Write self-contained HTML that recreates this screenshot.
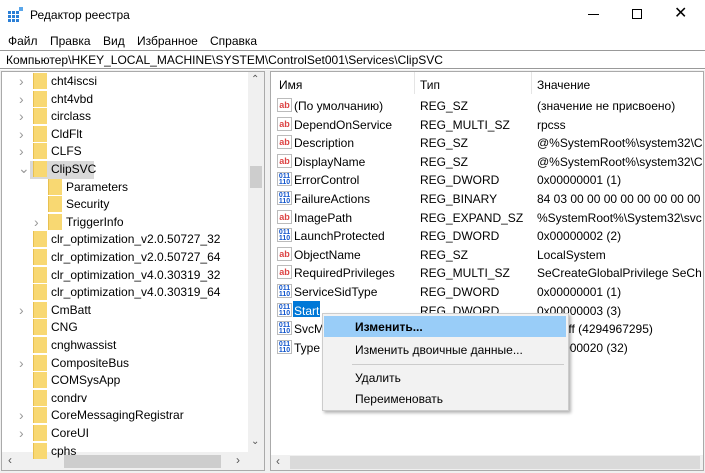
<!DOCTYPE html><html><head><meta charset="utf-8"><style>
*{margin:0;padding:0;box-sizing:border-box}
body{width:705px;height:473px;background:#fff;font-family:"Liberation Sans","DejaVu Sans",sans-serif;font-size:12px;color:#000;position:relative;overflow:hidden}
.a{position:absolute;white-space:nowrap}
.fold{position:absolute;width:14px;height:16px;background:#f8d872;border-left:1px solid #e8c050}
.chev{position:absolute;color:#999;font-size:14px;line-height:14px}
.ic{position:absolute;width:15px;height:14px;font-size:9px;font-weight:bold;line-height:13px;text-align:center;border:1px solid #bbb;background:#fff}
.ab{color:#d44}
.bn{color:#15c;font-size:7px;line-height:6px;padding-top:1px}
#rows{position:absolute;left:0;top:0;width:702px;height:473px;overflow:hidden}
</style></head><body>
<div class="a" style="left:0;top:0;width:705px;height:30px;background:#fff"></div>
<svg class="a" style="left:8px;top:7px" width="16" height="16"><g fill="#2b7fd6"><rect x="0" y="4" width="3" height="3"/><rect x="4" y="4" width="3" height="3"/><rect x="8" y="4" width="3" height="3"/><rect x="0" y="8" width="3" height="3"/><rect x="4" y="8" width="3" height="3"/><rect x="8" y="8" width="3" height="3"/><rect x="0" y="12" width="3" height="3"/><rect x="4" y="12" width="3" height="3"/><rect x="8" y="12" width="3" height="3"/><rect x="11" y="0" width="4" height="4" fill="#5aa6ea"/></g></svg>
<div class="a" style="left:30px;top:8px;font-size:12px">Редактор реестра</div>
<div class="a" style="left:588px;top:14px;width:11px;height:1px;background:#000"></div>
<div class="a" style="left:632px;top:9px;width:10px;height:10px;border:1px solid #000"></div>
<div class="a" style="left:674px;top:3px;font-size:16px;font-weight:300">✕</div>
<div class="a" style="left:8px;top:34px">Файл</div>
<div class="a" style="left:50px;top:34px">Правка</div>
<div class="a" style="left:103px;top:34px">Вид</div>
<div class="a" style="left:137px;top:34px">Избранное</div>
<div class="a" style="left:210px;top:34px">Справка</div>
<div class="a" style="left:0;top:50px;width:705px;height:19px;border-top:1px solid #999;border-bottom:1px solid #999;background:#fff"></div>
<div class="a" style="left:6px;top:53px">Компьютер\HKEY_LOCAL_MACHINE\SYSTEM\ControlSet001\Services\ClipSVC</div>
<div class="a" style="left:0;top:70px;width:705px;height:403px;background:#f0f0f0"></div>
<div class="a" style="left:1px;top:71px;width:264px;height:400px;background:#fff;border:1px solid #aaa"></div>
<div class="a" style="left:270px;top:71px;width:434px;height:400px;background:#fff;border:1px solid #aaa"></div>
<div class="a" style="left:248px;top:72px;width:16px;height:380px;background:#f0f0f0"></div>
<div class="a" style="left:250px;top:166px;width:12px;height:22px;background:#cdcdcd"></div>
<div class="a" style="left:251px;top:74px;color:#555;font-size:10px">⌃</div>
<div class="a" style="left:251px;top:436px;color:#555;font-size:10px">⌄</div>
<div class="a" style="left:2px;top:452px;width:262px;height:18px;background:#f0f0f0"></div>
<div class="a" style="left:64px;top:455px;width:157px;height:13px;background:#cdcdcd"></div>
<div class="a" style="left:8px;top:453px;color:#555">‹</div>
<div class="a" style="left:236px;top:453px;color:#555">›</div>
<div class="a" style="left:271px;top:455px;width:432px;height:15px;background:#f0f0f0"></div>
<div class="a" style="left:290px;top:456px;width:410px;height:13px;background:#dadada"></div>
<div class="a" style="left:276px;top:454px;color:#555">‹</div>
<div class="a" style="left:30px;top:161px;width:64px;height:18px;background:#d9d9d9"></div>
<div id="tree"></div>
<div class="a" style="left:279px;top:78px">Имя</div>
<div class="a" style="left:414px;top:72px;width:1px;height:22px;background:#e5e5e5"></div>
<div class="a" style="left:420px;top:78px">Тип</div>
<div class="a" style="left:531px;top:72px;width:1px;height:22px;background:#e5e5e5"></div>
<div class="a" style="left:537px;top:78px">Значение</div>
<div class="a" style="left:293px;top:301px;width:27px;height:16px;background:#0078d7"></div>
<div id="rows"></div>
<div class="a" style="left:322px;top:313px;width:247px;height:98px;background:#f2f2f2;border:1px solid #ccc;box-shadow:2px 2px 3px rgba(0,0,0,.3)"></div>
<div class="a" style="left:324px;top:316px;width:242px;height:21px;background:#99cdf8"></div>
<div class="a" style="left:355px;top:320px;font-weight:bold">Изменить...</div>
<div class="a" style="left:355px;top:343px">Изменить двоичные данные...</div>
<div class="a" style="left:352px;top:364px;width:212px;height:1px;background:#ccc"></div>
<div class="a" style="left:355px;top:371px">Удалить</div>
<div class="a" style="left:355px;top:392px">Переименовать</div>
<script>
var t=[["cht4iscsi",0,1],["cht4vbd",0,1],["circlass",0,1],["CldFlt",0,1],["CLFS",0,1],["ClipSVC",0,2],["Parameters",1,0],["Security",1,0],["TriggerInfo",1,1],["clr_optimization_v2.0.50727_32",0,0],["clr_optimization_v2.0.50727_64",0,0],["clr_optimization_v4.0.30319_32",0,0],["clr_optimization_v4.0.30319_64",0,0],["CmBatt",0,1],["CNG",0,0],["cnghwassist",0,0],["CompositeBus",0,1],["COMSysApp",0,0],["condrv",0,0],["CoreMessagingRegistrar",0,1],["CoreUI",0,1],["cphs",0,0]];
var h="";t.forEach(function(r,i){var y=72+i*17.6,x=r[1]?48:33;
h+='<div class="fold" style="left:'+x+'px;top:'+(y+1)+'px"></div><div class="a" style="left:'+(x+18)+'px;top:'+(y+2)+'px">'+r[0]+'</div>';
if(r[2]==1)h+='<div class="chev" style="left:'+(x-14)+'px;top:'+(y+2)+'px">›</div>';
if(r[2]==2)h+='<div class="chev" style="left:'+(x-15)+'px;top:'+(y+1)+'px">⌄</div>';});
document.getElementById("tree").innerHTML=h;
var R=[["ab","(По умолчанию)","REG_SZ","(значение не присвоено)"],["ab","DependOnService","REG_MULTI_SZ","rpcss"],["ab","Description","REG_SZ","@%SystemRoot%\\system32\\ClipSVC.dll"],["ab","DisplayName","REG_SZ","@%SystemRoot%\\system32\\ClipSVC.dll"],["b","ErrorControl","REG_DWORD","0x00000001 (1)"],["b","FailureActions","REG_BINARY","84 03 00 00 00 00 00 00 00 00 00 00"],["ab","ImagePath","REG_EXPAND_SZ","%SystemRoot%\\System32\\svchost.exe"],["b","LaunchProtected","REG_DWORD","0x00000002 (2)"],["ab","ObjectName","REG_SZ","LocalSystem"],["ab","RequiredPrivileges","REG_MULTI_SZ","SeCreateGlobalPrivilege SeChangeNotify"],["b","ServiceSidType","REG_DWORD","0x00000001 (1)"],["b","Start","REG_DWORD","0x00000003 (3)"],["b","SvcMemSoftLimit","REG_DWORD","0xffffffff (4294967295)"],["b","Type","REG_DWORD","0x00000020 (32)"]];
h="";R.forEach(function(r,i){var y=97+i*18.6;
h+=(r[0]=="ab"?'<div class="ic ab" style="left:277px;top:'+(y+1)+'px">ab</div>':'<div class="ic bn" style="left:277px;top:'+(y+1)+'px">011<br>110</div>');
h+='<div class="a" style="left:294px;top:'+(y+2)+'px;'+(i==11?'color:#fff':'')+'">'+r[1]+'</div><div class="a" style="left:420px;top:'+(y+2)+'px">'+r[2]+'</div><div class="a" style="left:537px;top:'+(y+2)+'px">'+r[3]+'</div>';});
document.getElementById("rows").innerHTML=h;
</script>
</body></html>
